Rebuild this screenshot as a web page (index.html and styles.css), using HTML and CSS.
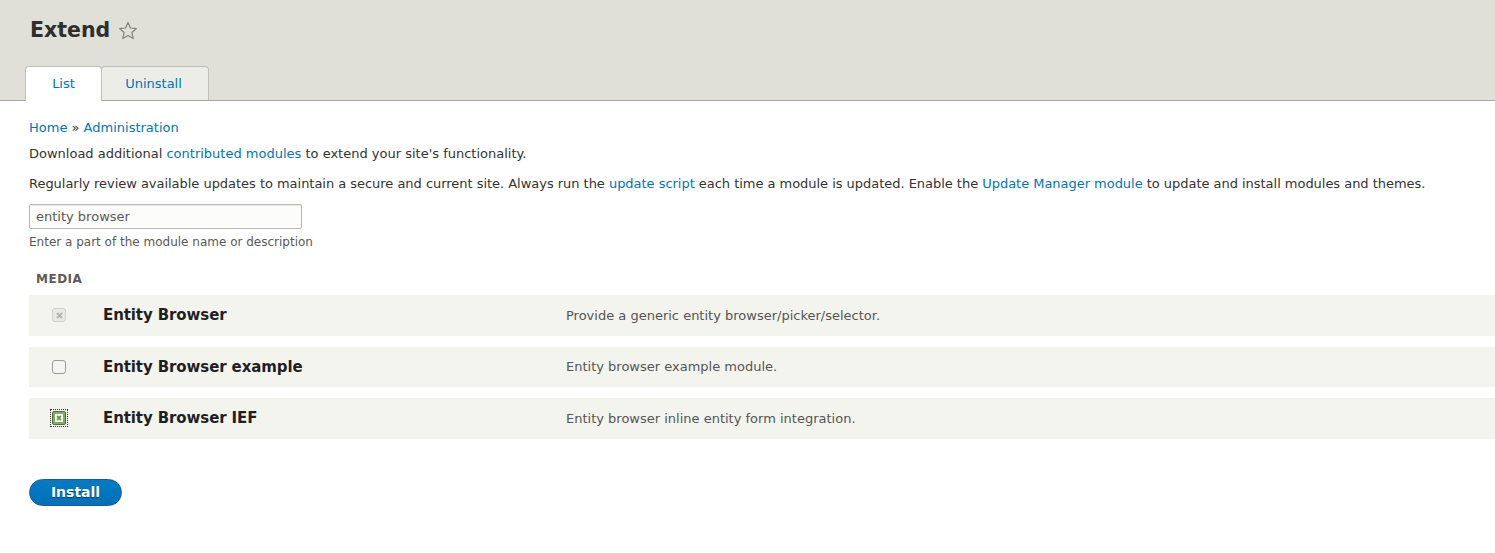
FILE: index.html
```html
<!DOCTYPE html>
<html>
<head>
<meta charset="utf-8">
<link rel="stylesheet" href="styles.css">
</head>
<body>
<header class="head">
  <h1 class="title">Extend <svg class="star" width="20" height="20" viewBox="0 0 18 18"><path d="M9 1.3 L11.2 6.3 L16.6 6.8 L12.5 10.4 L13.7 15.8 L9 13 L4.3 15.8 L5.5 10.4 L1.4 6.8 L6.8 6.3 Z" fill="none" stroke="#85857b" stroke-width="1.1" stroke-linejoin="round"/></svg></h1>
  <nav class="tabs">
    <a class="tab active">List</a>
    <a class="tab">Uninstall</a>
  </nav>
</header>
<main class="content">
  <div class="crumbs"><a>Home</a> » <a>Administration</a></div>
  <p class="p1">Download additional <a>contributed modules</a> to extend your site's functionality.</p>
  <p class="p2">Regularly review available updates to maintain a secure and current site. Always run the <a>update script</a> each time a module is updated. Enable the <a>Update Manager module</a> to update and install modules and themes.</p>
  <div class="search"><input class="field" value="entity browser"></div>
  <div class="hint">Enter a part of the module name or description</div>
  <div class="group">MEDIA</div>
  <div class="rows">
    <div class="row">
      <div class="cb-cell"><span class="cb disabled"><svg width="7" height="7" viewBox="0 0 7 7"><path d="M1 1L6 6M6 1L1 6" stroke="#b5b5b5" stroke-width="2"/></svg></span></div>
      <div class="name">Entity Browser</div>
      <div class="desc">Provide a generic entity browser/picker/selector.</div>
    </div>
    <div class="row">
      <div class="cb-cell"><span class="cb empty"></span></div>
      <div class="name">Entity Browser example</div>
      <div class="desc">Entity browser example module.</div>
    </div>
    <div class="row">
      <div class="cb-cell"><span class="focus"><span class="cb checked"><span class="inner"><svg width="6" height="6" viewBox="0 0 6 6"><path d="M1 1L5 5M5 1L1 5" stroke="#6f9a4c" stroke-width="1.8"/></svg></span></span></span></div>
      <div class="name">Entity Browser IEF</div>
      <div class="desc">Entity browser inline entity form integration.</div>
    </div>
  </div>
  <button class="btn">Install</button>
</main>
</body>
</html>
```
FILE: styles.css
```css
* { box-sizing: border-box; }
html, body { margin: 0; padding: 0; background: #fff; }
body {
  font-family: "DejaVu Sans", Verdana, sans-serif;
  font-size: 13px;
  color: #333;
  overflow: hidden;
}
a { color: #0074bd; text-decoration: none; }

.head {
  background: #e0e0d8;
  border-bottom: 1px solid #a6a6a6;
  padding: 0 0 0 25px;
  height: 101px;
  display: flex;
  flex-direction: column;
}
.title {
  margin: 17px 0 0 5px;
  font-size: 20.5px;
  font-weight: bold;
  color: #2e2e2e;
  line-height: 26px;
  height: 26px;
  display: flex;
  align-items: center;
  gap: 8px;
}
.star { margin-top: 1px; }
.tabs {
  margin-top: 23px;
  display: flex;
  height: 35px;
}
.tab {
  display: block;
  line-height: 34px;
  font-size: 13px;
  background: #ededE7;
  border: 1px solid #bfbfba;
  border-bottom: none;
  border-radius: 4px 4px 0 0;
  text-align: center;
  color: #0074bd;
}
.tab.active {
  background: #fff;
  width: 77px;
  height: 35px;
  margin-bottom: -1px;
  position: relative;
  z-index: 1;
}
.tab:not(.active) {
  width: 108px;
  height: 34px;
  margin-left: -1px;
  padding-right: 3px;
}

.content { padding: 19px 0 0 29px; }
.crumbs { line-height: 16px; height: 16px; }
.p1 { margin: 10px 0 0; line-height: 16px; }
.p2 { margin: 14px 0 0; line-height: 16px; white-space: nowrap; letter-spacing: -0.03px; }
.search { margin-top: 12px; }
.field {
  width: 273px;
  height: 25px;
  border: 1px solid #b8b8b8;
  border-radius: 2px;
  background: #fcfcfa;
  font-family: "DejaVu Sans", Verdana, sans-serif;
  font-size: 13px;
  color: #595959;
  padding: 0 6px;
  box-shadow: inset 0 1px 1px rgba(0,0,0,0.08);
}
.hint { margin-top: 6px; font-size: 12px; color: #595959; line-height: 15px; }
.group {
  margin: 22px 0 0 7px;
  font-size: 12px;
  font-weight: bold;
  letter-spacing: 0.5px;
  color: #5c5b58;
  line-height: 15px;
}
.rows {
  margin-top: 8px;
  display: flex;
  flex-direction: column;
  gap: 11px;
  margin-right: -40px;
}
.row {
  height: 40.5px;
  background: #f3f4ee;
  display: flex;
  align-items: center;
}
.cb-cell { width: 74px; display: flex; align-items: center; padding-left: 23px; }
.cb {
  width: 14px; height: 14px;
  border-radius: 3px;
  display: flex; align-items: center; justify-content: center;
}
.cb.disabled { background: #e9e9e6; border: 1px solid #cfcfcc; }
.cb.empty { background: #f5f5f4; border: 1px solid #9b9b98; }
.focus { outline: 1px dotted #333; outline-offset: 1px; display: flex; }
.cb.checked { background: #86a96a; border: 1px solid #52703a; border-radius: 2px; }
.cb.checked .inner { width: 8px; height: 8px; background: #fff; display: flex; align-items: center; justify-content: center; }
.name {
  width: 463px;
  font-size: 15px;
  font-weight: bold;
  color: #1f1f1f;
  letter-spacing: -0.1px;
}
.desc { color: #555; font-size: 13px; }

.btn {
  margin-top: 40px;
  width: 93px;
  height: 27px;
  border: 1px solid #1e5c90;
  border-radius: 20px;
  background: linear-gradient(#007bc6, #0071b8);
  color: #fff;
  font-family: "DejaVu Sans", Verdana, sans-serif;
  font-weight: bold;
  font-size: 14px;
  text-shadow: 0 1px 1px rgba(0,0,0,0.5);
  padding: 0;
  display: block;
}
```
